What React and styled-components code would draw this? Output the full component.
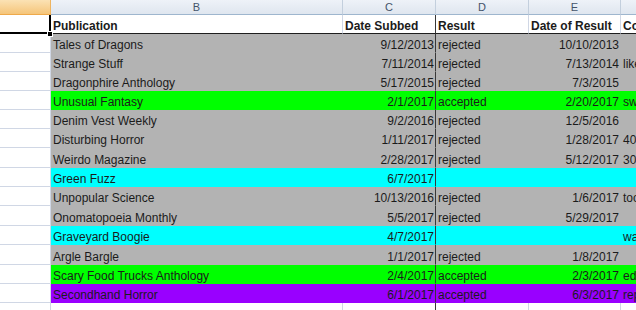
import React from "react";
import styled, { createGlobalStyle } from "styled-components";

const GRID = "#d0d7e5";
const COLS = "51px 292px 93px 93px 92px 140px";

const FILLS = {
  gray: "#b3b3b3",
  green: "#00ff00",
  cyan: "#00ffff",
  purple: "#9900ff",
};

const Global = createGlobalStyle`
  html, body {
    margin: 0;
    padding: 0;
    background: #ffffff;
    overflow: hidden;
  }
  body {
    font-family: "Liberation Sans", Arial, sans-serif;
  }
`;

const Sheet = styled.div`
  width: 636px;
  height: 310px;
  overflow: hidden;
  display: flex;
  flex-direction: column;
`;

const ColumnHeaderBar = styled.div`
  display: grid;
  grid-template-columns: ${COLS};
  height: 15px;
  flex: none;
`;

const ColumnLetter = styled.div`
  box-sizing: border-box;
  height: 15px;
  text-align: center;
  font-size: 11px;
  line-height: 14px;
  color: ${(p) => (p.$selected ? "#4a3a1a" : "#44546a")};
  background: ${(p) =>
    p.$selected
      ? "linear-gradient(#fbe2b4, #f5c57a)"
      : "linear-gradient(#eef2f8, #dfe6ef)"};
  border-right: 1px solid ${(p) => (p.$selected ? "#eeb460" : "#c3cfdd")};
  border-bottom: 1px solid ${(p) => (p.$selected ? "#eea94a" : "#9eb6ce")};
`;

const Row = styled.div`
  display: grid;
  grid-template-columns: ${COLS};
  height: ${(p) => p.$h}px;
  flex: none;
`;

const Cell = styled.div`
  position: relative;
  box-sizing: border-box;
  display: flex;
  align-items: flex-end;
  justify-content: ${(p) => (p.$align === "right" ? "flex-end" : "flex-start")};
  padding: 0 1px 0 2px;
  background: ${(p) => p.$fill || "#ffffff"};
  border-right: 1px solid
    ${(p) => (p.$divider ? "#383838" : p.$fill || GRID)};
  border-bottom: 1px solid
    ${(p) => (p.$rule ? "#1e1e1e" : p.$fill || GRID)};
  font-size: 12px;
  line-height: 14px;
  font-weight: ${(p) => (p.$bold ? 700 : 400)};
  color: #1b1b1b;
  white-space: nowrap;
  overflow: ${(p) => (p.$visible ? "visible" : "hidden")};
`;

const SelectionFrame = styled.div`
  position: absolute;
  top: 0;
  left: -10px;
  right: -1px;
  bottom: -1px;
  border-right: 2px solid #000;
  border-bottom: 2px solid #000;
  pointer-events: none;
  z-index: 2;
`;

const FillHandle = styled.div`
  position: absolute;
  right: -3px;
  bottom: -4px;
  width: 6px;
  height: 6px;
  box-sizing: border-box;
  background: #000;
  border: 1px solid #fff;
  z-index: 3;
`;

const headers = ["Publication", "Date Subbed", "Result", "Date of Result", "Comments"];

const rows = [
  ["Tales of Dragons", "9/12/2013", "rejected", "10/10/2013", "", "gray", 19],
  ["Strange Stuff", "7/11/2014", "rejected", "7/13/2014", "likes the style", "gray", 19],
  ["Dragonphire Anthology", "5/17/2015", "rejected", "7/3/2015", "", "gray", 19],
  ["Unusual Fantasy", "2/1/2017", "accepted", "2/20/2017", "sweet", "green", 19],
  ["Denim Vest Weekly", "9/2/2016", "rejected", "12/5/2016", "", "gray", 19],
  ["Disturbing Horror", "1/11/2017", "rejected", "1/28/2017", "40 days", "gray", 19],
  ["Weirdo Magazine", "2/28/2017", "rejected", "5/12/2017", "30 days", "gray", 20],
  ["Green Fuzz", "6/7/2017", "", "", "", "cyan", 19],
  ["Unpopular Science", "10/13/2016", "rejected", "1/6/2017", "too long", "gray", 19],
  ["Onomatopoeia Monthly", "5/5/2017", "rejected", "5/29/2017", "", "gray", 20],
  ["Graveyard Boogie", "4/7/2017", "", "", "waiting", "cyan", 19],
  ["Argle Bargle", "1/1/2017", "rejected", "1/8/2017", "", "gray", 20],
  ["Scary Food Trucks Anthology", "2/4/2017", "accepted", "2/3/2017", "edits", "green", 19],
  ["Secondhand Horror", "6/1/2017", "accepted", "6/3/2017", "reprint", "purple", 19],
];

export default function App() {
  return (
    <>
      <Global />
      <Sheet>
        <ColumnHeaderBar>
          <ColumnLetter $selected />
          <ColumnLetter>B</ColumnLetter>
          <ColumnLetter>C</ColumnLetter>
          <ColumnLetter>D</ColumnLetter>
          <ColumnLetter>E</ColumnLetter>
          <ColumnLetter>F</ColumnLetter>
        </ColumnHeaderBar>

        <Row $h={19}>
          <Cell $visible>
            <SelectionFrame />
            <FillHandle />
          </Cell>
          <Cell $bold $rule>{headers[0]}</Cell>
          <Cell $bold $rule $divider>{headers[1]}</Cell>
          <Cell $bold $rule>{headers[2]}</Cell>
          <Cell $bold $rule>{headers[3]}</Cell>
          <Cell $bold $rule>{headers[4]}</Cell>
        </Row>

        {rows.map(([pub, sub, res, dres, com, fill, h]) => {
          const f = FILLS[fill];
          return (
            <Row key={pub} $h={h}>
              <Cell />
              <Cell $fill={f}>{pub}</Cell>
              <Cell $fill={f} $align="right" $divider>{sub}</Cell>
              <Cell $fill={f}>{res}</Cell>
              <Cell $fill={f} $align="right">{dres}</Cell>
              <Cell $fill={f}>{com}</Cell>
            </Row>
          );
        })}

        <Row $h={19}>
          <Cell />
          <Cell />
          <Cell $divider />
          <Cell />
          <Cell />
          <Cell />
        </Row>
      </Sheet>
    </>
  );
}
